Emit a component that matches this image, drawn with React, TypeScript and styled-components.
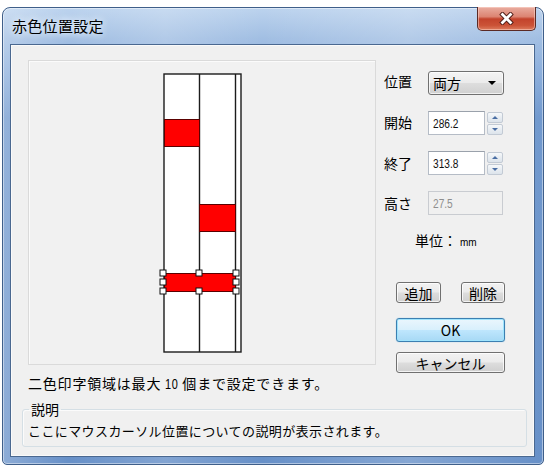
import React from 'react';
import styled, { createGlobalStyle, css } from 'styled-components';

const uiFont = `"Noto Sans CJK JP", "Noto Sans", sans-serif`;
const numFont = `"Liberation Sans", "Noto Sans CJK JP", sans-serif`;

const GlobalStyle = createGlobalStyle`
  html, body {
    margin: 0;
    padding: 0;
    background: #ffffff;
  }
  body {
    font-family: ${uiFont};
    color: #000;
  }
`;

const Desktop = styled.div`
  width: 548px;
  height: 474px;
  box-sizing: border-box;
  padding: 7px 0 0 2px;
`;

const Window = styled.div`
  width: 542px;
  height: 458px;
  box-sizing: border-box;
  display: flex;
  flex-direction: column;
  padding: 0 8px 7px 7px;
  border: 1px solid #3f5f8a;
  border-radius: 8px 8px 5px 5px;
  background:
    linear-gradient(90deg, rgba(255, 255, 255, 0.25) 0%, rgba(255, 255, 255, 0) 12%, rgba(255, 255, 255, 0.18) 30%, rgba(255, 255, 255, 0) 48%, rgba(255, 255, 255, 0.2) 75%, rgba(255, 255, 255, 0) 100%),
    linear-gradient(180deg, #bcd3ee 0px, #a2bfe3 30px, #8fb1dd 60px, #7199ce 110px, #6790c8 100%);
  box-shadow: inset 0 0 0 1px rgba(255, 255, 255, 0.45);
`;

const TitleBar = styled.div`
  height: 36px;
  display: flex;
  justify-content: space-between;
  align-items: flex-start;
`;

const Title = styled.div`
  margin: 8px 0 0 2px;
  font-size: 15px;
  line-height: 20px;
  letter-spacing: 0.3px;
  color: #000;
  text-shadow: 0 0 6px #eaf2fb, 0 0 10px #eaf2fb;
`;

const CloseButton = styled.div`
  width: 59px;
  height: 24px;
  margin: -1px -1px 0 0;
  box-sizing: border-box;
  display: flex;
  align-items: center;
  justify-content: center;
  border: 1px solid #5b2a24;
  border-top: none;
  border-radius: 0 0 5px 5px;
  background: linear-gradient(180deg, #e9ada0 0%, #dc8472 42%, #c3432c 52%, #cb5337 80%, #dd7c5e 100%);
  box-shadow: inset 0 0 0 1px rgba(255, 220, 210, 0.5);
`;

const Client = styled.div`
  flex: 1;
  display: flex;
  flex-direction: column;
  box-sizing: border-box;
  padding: 15px 0 0 17px;
  background: #f0f0f0;
  border: 1px solid #4a6890;
  box-shadow: inset 0 0 0 1px #fafafa;
`;

const TopRow = styled.div`
  height: 305px;
  display: flex;
  align-items: flex-start;
`;

const PreviewPanel = styled.div`
  width: 348px;
  height: 305px;
  box-sizing: border-box;
  display: flex;
  align-items: center;
  justify-content: center;
  border: 1px solid #dadada;
  box-shadow: inset 1px 1px 0 #fbfbfb;
  background: #f1f1f1;
`;

const SidePanel = styled.div`
  margin-left: 8px;
  padding-top: 11px;
  display: flex;
  flex-direction: column;
`;

const FieldGrid = styled.div`
  display: grid;
  grid-template-columns: 44px 77px;
  grid-auto-rows: 24px;
  row-gap: 16px;
  align-items: center;
`;

const Label = styled.div<{ $lift?: number }>`
  font-size: 14px;
  line-height: 16px;
  margin-top: ${(p) => (p.$lift ? -p.$lift : 0)}px;
`;

const ComboBox = styled.div`
  width: 76px;
  height: 24px;
  box-sizing: border-box;
  display: flex;
  align-items: center;
  justify-content: space-between;
  padding: 0 7px 0 4px;
  border: 1px solid #707070;
  border-radius: 3px;
  background: linear-gradient(180deg, #f4f4f4 0%, #ebebeb 48%, #dddddd 52%, #d0d0d0 100%);
  box-shadow: inset 0 0 0 1px rgba(255, 255, 255, 0.7);
  font-size: 14px;
`;

const Caret = styled.span`
  width: 0;
  height: 0;
  border-left: 4px solid transparent;
  border-right: 4px solid transparent;
  border-top: 4px solid #000;
`;

const SpinField = styled.div`
  display: flex;
  align-items: center;
  gap: 2px;
`;

const TextBox = styled.div<{ $width: number; $disabled?: boolean }>`
  width: ${(p) => p.$width}px;
  height: 24px;
  box-sizing: border-box;
  display: flex;
  align-items: center;
  padding-left: 4px;
  border: 1px solid #b5bcc6;
  border-top-color: #9aa1ab;
  background: #ffffff;
  color: #111;
  ${(p) =>
    p.$disabled &&
    css`
      background: #f0f0f0;
      border-color: #c9ccd1;
      color: #8e8e8e;
    `}
`;

// the dialog font draws digits narrow, so squeeze them a little
const Digits = styled.span<{ $size?: number }>`
  display: inline-block;
  font-family: ${numFont};
  font-size: ${(p) => p.$size ?? 13}px;
  transform: scaleX(0.78);
  transform-origin: left center;
`;

const SpinButtons = styled.div`
  display: flex;
  flex-direction: column;
  gap: 1px;
`;

const SpinButton = styled.div`
  width: 16px;
  height: 11px;
  box-sizing: border-box;
  display: flex;
  align-items: center;
  justify-content: center;
  border: 1px solid #c2cad4;
  border-radius: 2px;
  background: linear-gradient(180deg, #f6f8fa 0%, #e8edf2 50%, #dde4eb 100%);
`;

const Arrow = styled.span<{ $up?: boolean }>`
  width: 0;
  height: 0;
  border-left: 3px solid transparent;
  border-right: 3px solid transparent;
  ${(p) =>
    p.$up
      ? css`
          border-bottom: 3px solid #4a6ea3;
        `
      : css`
          border-top: 3px solid #4a6ea3;
        `}
`;

const UnitRow = styled.div`
  margin: 15px 0 0 31px;
  display: flex;
  align-items: baseline;
  font-size: 14px;
`;

const UnitValue = styled.span`
  margin-left: 3px;
  font-family: ${numFont};
  font-size: 10px;
`;

const ButtonRow = styled.div`
  margin: 32px 0 0 12px;
  display: flex;
  gap: 20px;
`;

const PushButton = styled.div<{ $width: number; $height?: number; $default?: boolean; $gap?: number }>`
  width: ${(p) => p.$width}px;
  height: ${(p) => p.$height ?? 21}px;
  margin-top: ${(p) => p.$gap ?? 0}px;
  box-sizing: border-box;
  display: flex;
  align-items: center;
  justify-content: center;
  border: 1px solid #707070;
  border-radius: 3px;
  background: linear-gradient(180deg, #f2f2f2 0%, #ebebeb 48%, #dddddd 52%, #cfcfcf 100%);
  box-shadow: inset 0 0 0 1px rgba(255, 255, 255, 0.75);
  font-size: 14px;
  line-height: 16px;
  ${(p) =>
    p.$default &&
    css`
      border-color: #3c7fb1;
      background: linear-gradient(180deg, #eaf6fd 0%, #d9f0fc 48%, #bee6fd 52%, #a7d9f5 100%);
      box-shadow: inset 0 0 0 1px #9fe4fd, 0 0 1px #6ab6e0;
    `}
`;

const WideButton = styled(PushButton)`
  margin-left: 12px;
`;

const Message = styled.div`
  margin-top: 9px;
  font-size: 14px;
  line-height: 18px;
  letter-spacing: 0.8px;
  display: flex;
  align-items: baseline;
`;

const HelpGroup = styled.fieldset`
  margin: 8px 0 0 -6px;
  width: 505px;
  box-sizing: border-box;
  padding: 0 0 6px 5px;
  border: 1px solid #d5dfe5;
  border-radius: 3px;
  box-shadow: inset 1px 1px 0 #fbfbfb;
`;

const HelpLegend = styled.legend`
  padding: 0 2px;
  margin-left: 1px;
  font-size: 14px;
  line-height: 16px;
`;

const HelpText = styled.div`
  margin-top: 5px;
  font-size: 13px;
  line-height: 18px;
  letter-spacing: 0.4px;
`;

// the strip preview: two lanes plus a narrow edge lane, red print areas on top
const StripPreview = () => {
  const handles: Array<[number, number]> = [
    [164, 273],
    [164, 282],
    [164, 291],
    [200, 273],
    [200, 291],
    [237, 273],
    [237, 282],
    [237, 291],
  ];
  return (
    <svg width="90" height="286" viewBox="158 70 90 286">
      <rect x="165" y="74" width="77" height="278" fill="#ffffff" stroke="#1c1c1c" strokeWidth="1.4" />
      <line x1="200.5" y1="74" x2="200.5" y2="352" stroke="#1c1c1c" strokeWidth="1.4" />
      <line x1="236.5" y1="74" x2="236.5" y2="352" stroke="#1c1c1c" strokeWidth="1.4" />
      <rect x="165.5" y="119.5" width="35" height="27" fill="#ff0000" stroke="#5a0000" strokeWidth="1" />
      <rect x="200.5" y="204.5" width="36" height="27" fill="#ff0000" stroke="#5a0000" strokeWidth="1" />
      <rect x="165.5" y="273.5" width="71" height="18" fill="#ff0000" stroke="#5a0000" strokeWidth="1" />
      {handles.map(([x, y]) => (
        <rect
          key={`${x}-${y}`}
          x={x - 3}
          y={y - 3}
          width="6"
          height="6"
          fill="#ffffff"
          stroke="#111"
          strokeWidth="1"
        />
      ))}
    </svg>
  );
};

const SpinBox = ({ value }: { value: string }) => (
  <SpinField>
    <TextBox $width={57}>
      <Digits>{value}</Digits>
    </TextBox>
    <SpinButtons>
      <SpinButton>
        <Arrow $up />
      </SpinButton>
      <SpinButton>
        <Arrow />
      </SpinButton>
    </SpinButtons>
  </SpinField>
);

const App = () => {
  return (
    <Desktop>
      <GlobalStyle />
      <Window>
        <TitleBar>
          <Title>赤色位置設定</Title>
          <CloseButton>
            <svg width="15" height="13" viewBox="0 0 15 13">
              <path d="M3.5 2.5 L11.5 10.5 M11.5 2.5 L3.5 10.5" stroke="#4a1a14" strokeWidth="4.6" strokeLinecap="square" />
              <path d="M3.5 2.5 L11.5 10.5 M11.5 2.5 L3.5 10.5" stroke="#ffffff" strokeWidth="2.8" strokeLinecap="square" />
            </svg>
          </CloseButton>
        </TitleBar>
        <Client>
          <TopRow>
            <PreviewPanel>
              <StripPreview />
            </PreviewPanel>
            <SidePanel>
              <FieldGrid>
                <Label $lift={4}>位置</Label>
                <ComboBox>
                  <span>両方</span>
                  <Caret />
                </ComboBox>
                <Label $lift={3}>開始</Label>
                <SpinBox value="286.2" />
                <Label>終了</Label>
                <SpinBox value="313.8" />
                <Label>高さ</Label>
                <TextBox $width={75} $disabled>
                  <Digits>27.5</Digits>
                </TextBox>
              </FieldGrid>
              <UnitRow>
                単位：<UnitValue>mm</UnitValue>
              </UnitRow>
              <ButtonRow>
                <PushButton $width={45}>追加</PushButton>
                <PushButton $width={44}>削除</PushButton>
              </ButtonRow>
              <WideButton $width={109} $height={24} $gap={15} $default>
                OK
              </WideButton>
              <WideButton $width={109} $gap={10}>
                キャンセル
              </WideButton>
            </SidePanel>
          </TopRow>
          <Message>
            二色印字領域は最大&nbsp;<Digits $size={14}>10</Digits>個まで設定できます。
          </Message>
          <HelpGroup>
            <HelpLegend>説明</HelpLegend>
            <HelpText>ここにマウスカーソル位置についての説明が表示されます。</HelpText>
          </HelpGroup>
        </Client>
      </Window>
    </Desktop>
  );
};

export default App;
